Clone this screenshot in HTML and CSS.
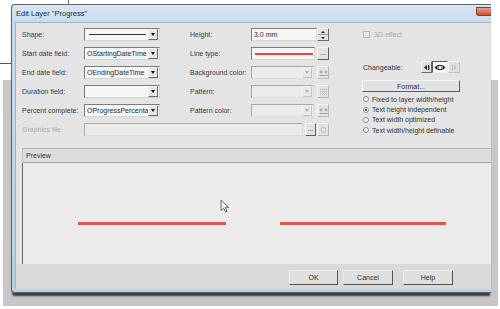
FILE: index.html
```html
<!DOCTYPE html>
<html>
<head>
<meta charset="utf-8">
<title>Edit Layer</title>
<link rel="stylesheet" href="styles.css">
</head>
<body>
<div class="desk">
  <div class="backwin"></div>
  <div class="backline"></div>
  <div class="backtick"></div>
  <div class="dialog">
    <div class="titlebar">
      <span class="title">Edit Layer "Progress"</span>
      <span class="close"></span>
    </div>
    <div class="client">
      <div class="form">
        <div class="side">
          <div class="chkrow"><span class="chk"></span><span class="dis">3D effect</span></div>
          <div class="chgrow">
            <span class="chglbl">Changeable:</span>
            <div class="seg">
              <span class="sb"><svg width="8" height="7" viewBox="0 0 8 7"><path d="M1 3.5 L4 1 V6 Z" fill="#222"/><rect x="5" y="1" width="1.3" height="5" fill="#222"/></svg></span>
              <span class="sb on"><svg width="12" height="7" viewBox="0 0 12 7"><path d="M0.5 3.5 L3 1.3 V5.7 Z" fill="#222"/><rect x="4" y="1.5" width="4" height="4" fill="none" stroke="#222" stroke-width="1"/><path d="M11.5 3.5 L9 1.3 V5.7 Z" fill="#222"/></svg></span>
              <span class="sb off"><svg width="8" height="7" viewBox="0 0 8 7"><rect x="2" y="1" width="1.2" height="5" fill="#bbb"/><path d="M7 3.5 L4 1 V6 Z" fill="#bbb"/></svg></span>
            </div>
          </div>
          <div class="btn fmt">Format...</div>
          <div class="radios">
            <div class="rad"><span class="rc"></span>Fixed to layer width/height</div>
            <div class="rad"><span class="rc on"></span>Text height independent</div>
            <div class="rad"><span class="rc"></span>Text width optimized</div>
            <div class="rad"><span class="rc"></span>Text width/height definable</div>
          </div>
        </div>

        <span class="lbl c1">Shape:</span>
        <div class="combo c2"><span class="txt"><i class="shapeline"></i></span><span class="drop"><i class="tri"></i></span></div>
        <span class="lbl c4">Height:</span>
        <div class="fld c5">
          <div class="edit spinedit"><span class="txt">3.0 mm</span></div>
          <span class="spin"><i class="up"></i><i class="dn"></i></span>
        </div>

        <span class="lbl c1">Start date field:</span>
        <div class="combo c2"><span class="txt">OStartingDateTime</span><span class="drop"><i class="tri"></i></span></div>
        <span class="lbl c4">Line type:</span>
        <div class="fld c5">
          <div class="edit"><span class="txt"><i class="redline"></i></span></div>
          <span class="btn sq">...</span>
        </div>

        <span class="lbl c1">End date field:</span>
        <div class="combo c2"><span class="txt">OEndingDateTime</span><span class="drop"><i class="tri"></i></span></div>
        <span class="lbl c4">Background color:</span>
        <div class="fld c5">
          <div class="combo disabled"><span class="txt"></span><span class="drop"><i class="tri"></i></span></div>
          <span class="btn sq ico"><svg width="9" height="8" viewBox="0 0 9 8"><path d="M0.5 3H3.5M2 1.5V4.5M5.5 3H8.5M7 1.5V4.5M0.5 6.5H8.5" stroke="#9a9a9a" stroke-width="0.9" fill="none"/></svg></span>
        </div>

        <span class="lbl c1">Duration field:</span>
        <div class="combo c2"><span class="txt"></span><span class="drop"><i class="tri"></i></span></div>
        <span class="lbl c4">Pattern:</span>
        <div class="fld c5">
          <div class="combo disabled"><span class="txt"></span><span class="drop"><i class="tri"></i></span></div>
          <span class="btn sq ico"><svg width="9" height="8" viewBox="0 0 9 8"><path d="M1 1.5H8M1 4H8M1 6.5H8M2 1V7M4.5 1V7M7 1V7" stroke="#b0b0b0" stroke-width="0.7" stroke-dasharray="1 1" fill="none"/></svg></span>
        </div>

        <span class="lbl c1">Percent complete:</span>
        <div class="combo c2"><span class="txt">OProgressPercenta</span><span class="drop"><i class="tri"></i></span></div>
        <span class="lbl c4">Pattern color:</span>
        <div class="fld c5">
          <div class="combo disabled"><span class="txt"></span><span class="drop"><i class="tri"></i></span></div>
          <span class="btn sq ico"><svg width="9" height="8" viewBox="0 0 9 8"><path d="M0.5 3H3.5M2 1.5V4.5M5.5 3H8.5M7 1.5V4.5M0.5 6.5H8.5" stroke="#9a9a9a" stroke-width="0.9" fill="none"/></svg></span>
        </div>

        <span class="lbl c1 dis">Graphics file:</span>
        <div class="fld wide">
          <div class="edit disabled"><span class="txt"></span></div>
          <span class="btn sq dbtn">...</span>
          <span class="btn sq ico g1"><svg width="9" height="8" viewBox="0 0 9 8"><circle cx="4.5" cy="4" r="2.6" stroke="#b0b0b0" stroke-width="0.8" fill="none"/></svg></span>
        </div>
      </div>

      <div class="preview">
        <div class="phead">Preview</div>
        <div class="pbody">
          <i class="pline p1"></i>
          <i class="pline p2"></i>
          <svg class="cursor" width="10" height="14" viewBox="0 0 10 14"><path d="M1 1 V11.5 L3.6 9.2 L5.6 13 L7.2 12.2 L5.3 8.6 H8.8 Z" fill="#f4f4f4" stroke="#6a6a6a" stroke-width="1" stroke-linejoin="round"/></svg>
        </div>
      </div>

      <div class="footer">
        <span class="btn fb ok">OK</span>
        <span class="btn fb cancel">Cancel</span>
        <span class="btn fb help">Help</span>
      </div>
    </div>
  </div>
</div>
</body>
</html>
```

FILE: styles.css
```css
* { box-sizing: border-box; margin: 0; padding: 0; }
html, body { width: 500px; height: 309px; overflow: hidden; background: #ffffff; }
body {
  font-family: "Liberation Sans", Arial, sans-serif;
  font-size: 7px;
  color: #383838;
  position: relative;
}
i { display: block; font-style: normal; }

.desk { position: relative; height: 309px; padding: 4px 0 0 11px; }
.backwin { position: absolute; left: 3px; top: 80px; width: 495px; height: 226px; background: #c7c7c7; }
.backline { position: absolute; left: 0; top: 63px; width: 11px; height: 1px; background: #555; }
.backtick { position: absolute; left: 68px; top: 0; width: 1px; height: 4px; background: #777; }

.dialog {
  position: relative;
  width: 480px;
  height: 289px;
  border: 1px solid #5c636c;
  border-right: 0;
  border-radius: 4px 0 0 4px;
  background: linear-gradient(#d9e6f2, #c8dbee 18px, #b9cfe6);
  padding: 0 0 3px 3px;
  display: flex;
  flex-direction: column;
  box-shadow: 0 4px 2px -1px #3a3a3a;
}
.titlebar {
  height: 17px;
  display: flex;
  justify-content: space-between;
  align-items: center;
}
.title { padding-left: 1px; font-size: 7.5px; color: #1f2a36; }
.close {
  align-self: flex-start;
  margin-top: 2px;
  width: 15px;
  height: 9px;
  border-radius: 0 0 0 3px;
  background: linear-gradient(#eaa088, #cf4e34);
  border: 1px solid #8e3a2a;
  border-right: 0;
}

.client {
  flex: 1;
  background: #e4e4e4;
  border-top: 1px solid #9fb2c6;
  border-left: 1px solid #9fb2c6;
  display: flex;
  flex-direction: column;
}

.form {
  display: grid;
  grid-template-columns: 62px 76px 30px 61px 78px 33px 1fr;
  grid-template-rows: repeat(6, 19px);
  align-items: center;
  padding: 2px 0 0 6px;
}
.c1 { grid-column: 1; }
.c2 { grid-column: 2; }
.c4 { grid-column: 4; }
.c5 { grid-column: 5; }
.wide { grid-column: 2 / 6; }
.lbl { white-space: nowrap; color: #3a3a3a; }
.dis { color: #a9a9a9; }

.combo, .edit {
  display: flex;
  height: 13px;
  border: 1px solid;
  border-color: #7c7c7c #d6d6d6 #d6d6d6 #7c7c7c;
  background: #f6f6f6;
  min-width: 0;
}
.txt {
  flex: 1;
  min-width: 0;
  white-space: nowrap;
  line-height: 11px;
  padding-left: 2px;
  color: #2a2a2a;
  display: flex;
  align-items: center;
}
.drop {
  width: 10px;
  margin: 0 1px 0 0;
  background: #e6e6e6;
  border: 1px solid;
  border-color: #f4f4f4 #6a6a6a #6a6a6a #f4f4f4;
  display: flex;
  align-items: center;
  justify-content: center;
}
.tri {
  width: 0; height: 0;
  border-left: 2.5px solid transparent;
  border-right: 2.5px solid transparent;
  border-top: 3px solid #111;
}
.shapeline { width: 57px; height: 1px; background: #333; margin-left: 2px; }
.redline { width: 58px; height: 2px; background: #e2463a; margin-left: 1px; }

.combo.disabled, .edit.disabled {
  border-color: #a8a8a8 #dedede #dedede #a8a8a8;
  background: #ebebeb;
}
.combo.disabled .drop {
  border-color: #f2f2f2 #c4c4c4 #c4c4c4 #f2f2f2;
  background: #e8e8e8;
}
.combo.disabled .tri { border-top-color: #b0b0b0; }

.fld { display: flex; align-items: center; height: 13px; }
.fld > .combo, .fld > .edit { flex: 1; }
.fld > .combo.disabled { margin-right: 3px; }
.fld > .edit { margin-right: 2px; }
.fld > .spinedit { margin-right: 0; }

.spin {
  width: 12px;
  height: 13px;
  display: flex;
  flex-direction: column;
  border: 1px solid;
  border-color: #f2f2f2 #6a6a6a #6a6a6a #f2f2f2;
  background: #e6e6e6;
}
.spin i { flex: 1; display: flex; align-items: center; justify-content: center; position: relative; }
.spin .up { border-bottom: 1px solid #9a9a9a; }
.spin .up::after {
  content: ""; border-left: 2px solid transparent; border-right: 2px solid transparent; border-bottom: 2px solid #222;
}
.spin .dn::after {
  content: ""; border-left: 2px solid transparent; border-right: 2px solid transparent; border-top: 2px solid #222;
}

.btn {
  display: flex;
  align-items: center;
  justify-content: center;
  background: #e3e3e3;
  border: 1px solid;
  border-color: #f6f6f6 #5e5e5e #5e5e5e #f6f6f6;
  color: #2c2c2c;
  white-space: nowrap;
}
.btn.sq { width: 12px; height: 13px; line-height: 9px; font-size: 7px; padding-bottom: 2px; }
.btn.ico { border-color: #f6f6f6 #b8b8b8 #b8b8b8 #f6f6f6; padding-bottom: 0; }
.btn.dbtn { width: 11px; margin-right: 1px; }

.side {
  grid-column: 7;
  grid-row: 1 / 7;
  align-self: start;
  display: flex;
  flex-direction: column;
}
.chkrow { height: 19px; display: flex; align-items: center; gap: 4px; padding-left: 1px; }
.chk { width: 7px; height: 7px; border: 1px solid #b4b4b4; background: #ececec; }
.chgrow { margin-top: 17px; height: 12px; display: flex; align-items: center; padding-left: 1px; }
.chglbl { width: 58px; color: #333; }
.seg { display: flex; height: 12px; }
.sb {
  width: 11px;
  display: flex;
  align-items: center;
  justify-content: center;
  background: #e0e0e0;
  border: 1px solid;
  border-color: #f6f6f6 #6a6a6a #6a6a6a #f6f6f6;
}
.sb.on { width: 16px; background: #f7f7f7; border-color: #5a5a5a #f0f0f0 #f0f0f0 #5a5a5a; }
.sb.off { width: 12px; border-color: #f6f6f6 #c0c0c0 #c0c0c0 #f6f6f6; }
.btn.fmt { margin-top: 7px; width: 98px; height: 12px; }
.radios { margin-top: 2px; display: flex; flex-direction: column; }
.rad { height: 10.4px; display: flex; align-items: center; gap: 3px; padding-left: 1px; color: #333; white-space: nowrap; }
.rc {
  width: 6px; height: 6px; border-radius: 50%;
  border: 1px solid #8a8a8a;
  background: #f8f8f8;
  display: flex; align-items: center; justify-content: center;
}
.rc.on::after { content: ""; width: 2px; height: 2px; border-radius: 50%; background: #222; }

.preview { margin: 9px 0 0 6px; display: flex; flex-direction: column; }
.phead {
  height: 15px;
  background: #dcdcdc;
  border-top: 1px solid #b2b2b2;
  border-left: 1px solid #c6c6c6;
  border-bottom: 1px solid #a4a4a4;
  padding-left: 3px;
  line-height: 13px;
  color: #333;
}
.pbody {
  position: relative;
  height: 101px;
  background: #ebebeb;
  border-left: 1px solid #6a6a6a;
  display: flex;
  align-items: flex-start;
  padding-top: 59px;
}
.pline { height: 3px; background: #e2574b; }
.p1 { margin-left: 55px; width: 148px; }
.p2 { margin-left: 54px; width: 166px; }
.cursor { position: absolute; left: 197px; top: 36px; }

.footer {
  height: 25px;
  background: #dadada;
  display: flex;
  align-items: flex-start;
  padding-top: 6px;
}
.btn.fb { height: 15px; border-color: #ededed #555 #555 #ededed; background: #e0e0e0; }
.ok { margin-left: 273px; width: 49px; }
.cancel { margin-left: 5px; width: 50px; }
.help { margin-left: 10px; width: 50px; }
```
